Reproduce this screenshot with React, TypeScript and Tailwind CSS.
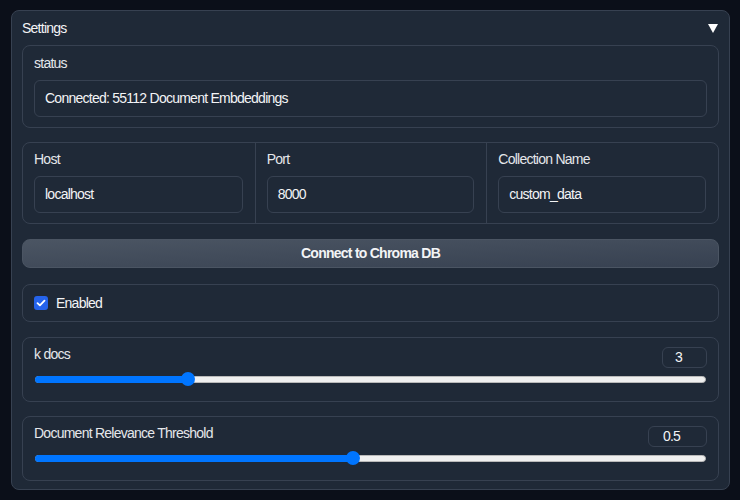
import React from "react";

const Slider = ({ fraction }: { fraction: number }) => {
  return (
    <div className="relative mx-px mt-[4px] flex h-[14px] items-center">
      <div className="h-[7px] w-full rounded-full border border-[#b9b9b9] bg-[#efefef]" />
      <div
        className="absolute left-0 h-[7px] rounded-full bg-[#0075ff]"
        style={{ width: `calc(${fraction} * (100% - 14px) + 7px)` }}
      />
      <div
        className="absolute top-0 h-[14px] w-[14px] rounded-full bg-[#0075ff]"
        style={{ left: `calc(${fraction} * (100% - 14px))` }}
      />
    </div>
  );
};

const TextBox = ({ value }: { value: string }) => (
  <div className="flex h-[37px] items-center rounded-[6px] border border-[#374151] px-[10px] text-[#f3f4f6]">{value}</div>
);

const SliderBlock = ({
  label,
  value,
  boxWidth,
  fraction,
}: {
  label: string;
  value: string;
  boxWidth: string;
  fraction: number;
}) => (
  <div className="rounded-lg border border-[#374151] px-[11px] pt-[9px] pb-[15px]">
    <div className="flex items-start justify-between">
      <span className="leading-[14px] text-[#e5e7eb]">{label}</span>
      <div
        className={`flex h-[21px] items-center justify-center rounded-[6px] border border-[#374151] pr-[12px] text-[#f3f4f6] ${boxWidth}`}
      >
        {value}
      </div>
    </div>
    <Slider fraction={fraction} />
  </div>
);

export default function App() {
  return (
    <div className="min-h-screen bg-[#0b0f19] pt-[10px] pr-[10px] pl-[11px] font-['Liberation_Sans',Arial,sans-serif] text-[14px] tracking-[-0.75px]">
      <div className="rounded-lg border border-[#374151] bg-[#1f2937] px-[10px] pt-[7px] pb-[8px]">
        <div className="flex h-5 items-center justify-between leading-5">
          <span className="text-[#f3f4f6]">Settings</span>
          <svg width="10" height="9" viewBox="0 0 10 9" className="mr-[1px]">
            <polygon points="0,0 10,0 5,9" fill="#ffffff" />
          </svg>
        </div>

        <div className="mt-[7px] rounded-lg border border-[#374151] px-[11px] pt-[7px] pb-[10px]">
          <div className="leading-5 text-[#e5e7eb]">status</div>
          <div className="mt-[7px]">
            <TextBox value="Connected: 55112 Document Embdeddings" />
          </div>
        </div>

        <div className="mt-[14px] grid grid-cols-3 rounded-lg border border-[#374151]">
          {[
            ["Host", "localhost"],
            ["Port", "8000"],
            ["Collection Name", "custom_data"],
          ].map(([label, value], i) => (
            <div
              key={label}
              className={`pt-[6px] pr-[12px] pb-[10px] pl-[11px] ${i > 0 ? "border-l border-[#374151]" : ""}`}
            >
              <div className="leading-5 text-[#e5e7eb]">{label}</div>
              <div className="mt-[7px]">
                <TextBox value={value} />
              </div>
            </div>
          ))}
        </div>

        <button className="mt-[15px] flex h-[29px] w-full items-center justify-center rounded-lg border border-[#4b5563] bg-linear-to-br from-[#4b5563] to-[#374151] font-bold text-[#f3f4f6]">
          Connect to Chroma DB
        </button>

        <div className="mt-[16px] flex items-center gap-[8px] rounded-lg border border-[#374151] px-[11px] py-[8px]">
          <div className="flex h-[14px] w-[14px] items-center justify-center rounded-[3px] bg-[#2563eb]">
            <svg width="10" height="8" viewBox="0 0 10 8">
              <path d="M1.5 4.2 L3.9 6.4 L8.5 1.6" fill="none" stroke="#ffffff" strokeWidth="1.8" strokeLinecap="round" strokeLinejoin="round" />
            </svg>
          </div>
          <span className="leading-5 text-[#f3f4f6]">Enabled</span>
        </div>

        <div className="mt-[15px]">
          <SliderBlock label="k docs" value="3" boxWidth="w-[45px]" fraction={2 / 9} />
        </div>
        <div className="mt-[14px]">
          <SliderBlock label="Document Relevance Threshold" value="0.5" boxWidth="w-[59px]" fraction={0.473} />
        </div>
      </div>
    </div>
  );
}
